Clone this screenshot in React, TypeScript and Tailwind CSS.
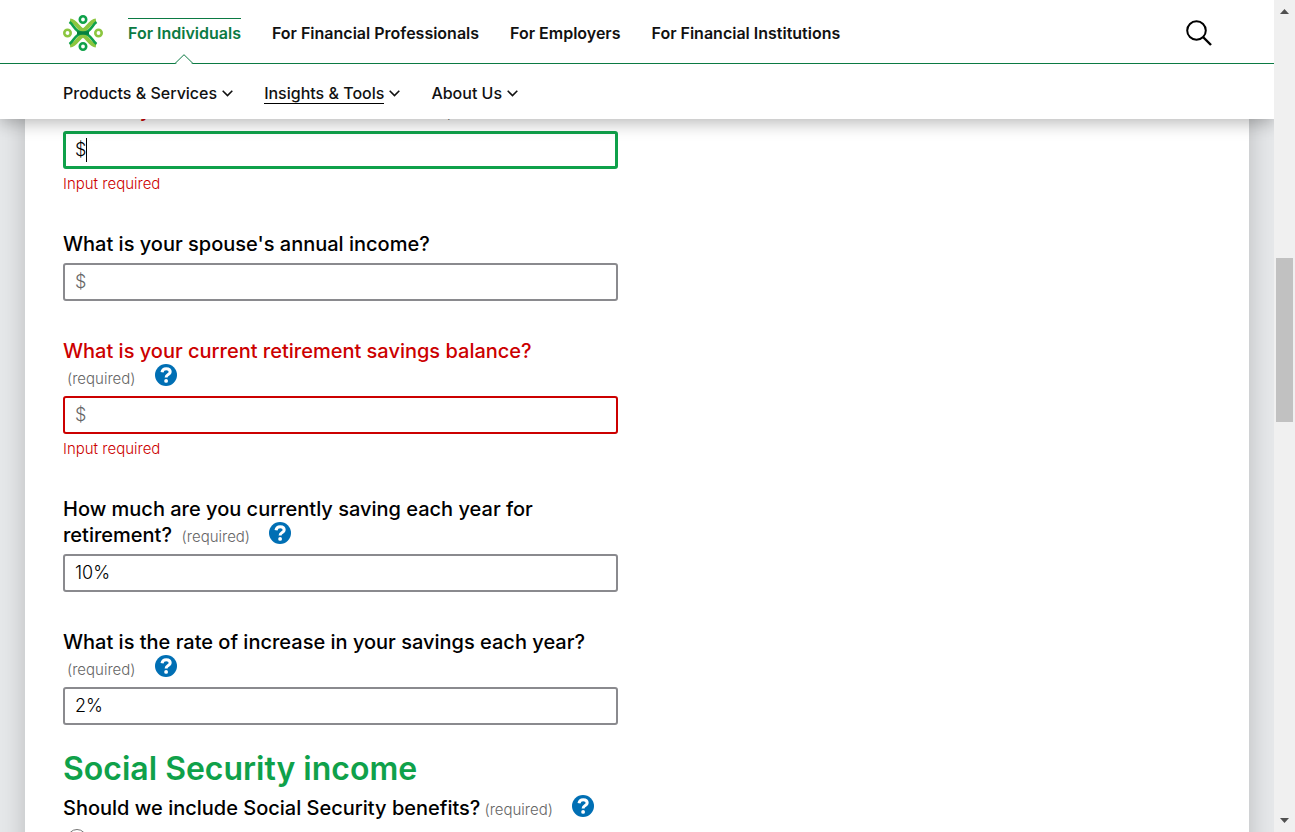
import { useId, useState } from 'react';

const audiences = ['For Individuals', 'For Financial Professionals', 'For Employers', 'For Financial Institutions'];
const sections = ['Products & Services', 'Insights & Tools', 'About Us'];

function Logo() {
  return (
    <svg width="40" height="36" viewBox="0 0 40 36" fill="none" aria-hidden="true">
      <g stroke="#8cc63f" strokeWidth="4">
        <path d="M33 5.500C25.500 6.500 24.500 16.500 15 18" />
        <path d="M7 5.500C14.500 6.500 15.500 16.500 25 18" />
        <path d="M33 30.500C25.500 29.500 24.500 19.500 15 18" />
        <path d="M7 30.500C14.500 29.500 15.500 19.500 25 18" />
      </g>
      <g stroke="#0fa14a" strokeWidth="2.600">
        <path d="M6.500 7C11 10 11.500 16 19 18C11.500 20 11 26 6.500 29" />
        <path d="M33.500 7C29 10 28.500 16 21 18C28.500 20 29 26 33.500 29" />
      </g>
      <path d="M14 16.300H26V19.700H14Z" fill="#078040" />
      <g strokeWidth="2.600">
        <circle cx="20" cy="4.500" r="3.200" stroke="#0fa14a" />
        <circle cx="20" cy="31.500" r="3.200" stroke="#0fa14a" />
        <circle cx="4.500" cy="18" r="3.200" stroke="#8cc63f" />
        <circle cx="35.500" cy="18" r="3.200" stroke="#8cc63f" />
      </g>
    </svg>
  );
}

function Chevron() {
  return (
    <svg width="11" height="7" viewBox="0 0 11 7" fill="none" stroke="#111" strokeWidth="1.6" aria-hidden="true">
      <path d="M.7 .8L5.500 5.600L10.300 .8" />
    </svg>
  );
}

function HelpButton() {
  return (
    <button type="button" aria-label="Help" className="ml-[19px] inline-block h-[22px] w-[22px] align-[-2px]">
      <svg width="22" height="22" viewBox="0 0 22 22" aria-hidden="true" className="block">
        <circle cx="11" cy="11" r="11" fill="#006fb4" />
        <path d="M7 8.300C7.400 5.700 9 4.700 11.200 4.700C13.600 4.700 15.200 6 15.200 8C15.200 10.600 11.100 10.500 11.100 13.400" fill="none" stroke="#fff" strokeWidth="3" />
        <circle cx="11.100" cy="16.900" r="1.900" fill="#fff" />
      </svg>
    </button>
  );
}

function Required({ id, help = true }: { id: string; help?: boolean }) {
  return (
    <span className="ml-1 inline-block whitespace-nowrap">
      <label htmlFor={id} className="text-[15px] leading-5 font-light text-[#666]">(required)</label>
      {help && <HelpButton />}
    </span>
  );
}

type FieldProps = { label: string; initial?: string; required?: boolean; help?: boolean; error?: boolean; active?: boolean };

function Field({ label, initial = '', required = false, help = true, error = false, active = false }: FieldProps) {
  const id = useId();
  const [value, setValue] = useState(initial);
  const border = active ? 'border-[3px] border-[#0fa14a] px-[9px]' : error ? 'border-2 border-[#c00] px-2.5' : 'border-2 border-[#8a8a8e] px-2.5';
  return (
    <div>
      <div className={active ? 'mb-2 text-xl leading-[26px]' : 'mb-1.5 text-xl leading-[26px]'}>
        <label htmlFor={id} className={error ? 'font-medium text-[#c00]' : 'font-medium text-black'}>{label}</label>{' '}
        {required && <Required id={id} help={help} />}
      </div>
      <div className={`flex h-[38px] items-center rounded-[3px] bg-white ${border}`}>
        {active && <span className="text-lg font-light text-black">$</span>}
        {active && <span className="h-6 w-px bg-black" />}
        <input
          id={id}
          value={value}
          onChange={(e) => setValue(e.target.value)}
          placeholder={active ? undefined : '$'}
          className="min-w-0 flex-1 bg-transparent text-lg font-light text-black outline-none placeholder:text-[#666]"
        />
      </div>
      {error && <p className="mt-[5px] text-[15px] leading-5 font-light text-[#c00]">Input required</p>}
    </div>
  );
}

function Header() {
  return (
    <header className="relative z-10 bg-white shadow-[0_4px_16px_rgba(0,0,0,0.28)]">
      <div className="flex h-16 items-stretch border-b border-[#0b7a43] pr-[62px] pl-[63px]">
        <a href="#home" aria-label="Home" className="mt-[15px]"><Logo /></a>
        <nav className="ml-[25px] flex gap-[31px] font-semibold text-[#111]">
          {audiences.map((name, i) =>
            i === 0 ? (
              <a key={name} href="#individuals" className="relative mt-[18px] border-t border-[#0b7a43] pt-0.5 text-[#0b7a43]">
                {name}
                <svg width="18" height="10" viewBox="0 0 18 10" className="absolute -bottom-px left-1/2 -translate-x-1/2" aria-hidden="true">
                  <path d="M0 9.500L9 .7L18 9.500" fill="#fff" stroke="#0b7a43" />
                  <path d="M1.500 9.500H16.500" stroke="#fff" />
                </svg>
              </a>
            ) : (
              <a key={name} href="#audience" className="mt-[21px]">{name}</a>
            ),
          )}
        </nav>
        <button type="button" aria-label="Search" className="ml-auto">
          <svg width="26" height="26" viewBox="0 0 26 26" fill="none" stroke="#000" strokeWidth="2" className="mt-[3px]" aria-hidden="true">
            <circle cx="10.500" cy="10.500" r="9.300" />
            <path d="M17 17L25 25" strokeWidth="2.400" />
          </svg>
        </button>
      </div>
      <nav className="flex h-[55px] items-center gap-[31px] px-[63px] pt-1 font-medium text-[#111]">
        {sections.map((name, i) => (
          <a key={name} href="#section" className="flex items-center gap-[5px]">
            <span className={i === 1 ? 'border-b border-black leading-5' : 'border-b border-transparent leading-5'}>{name}</span>
            <Chevron />
          </a>
        ))}
      </nav>
    </header>
  );
}

function ScrollTrack() {
  return (
    <div aria-hidden="true" className="relative z-20 flex w-[21px] shrink-0 flex-col items-center bg-[#f0f0f0] py-[9px]">
      <svg width="9" height="5" viewBox="0 0 9 5" fill="#505050"><path d="M0 5L4.500 0L9 5Z" /></svg>
      <div className="flex w-[17px] flex-1 flex-col">
        <div className="basis-[30.4%]" />
        <div className="basis-[20.4%] bg-[#c1c1c1]" />
      </div>
      <svg width="9" height="5" viewBox="0 0 9 5" fill="#505050"><path d="M0 0L4.500 5L9 0Z" /></svg>
    </div>
  );
}

export default function App() {
  return (
    <div className="flex h-screen overflow-hidden font-[Inter,sans-serif] text-base">
      <div className="flex min-w-0 flex-1 flex-col">
        <Header />
        <main className="min-h-0 flex-1 overflow-hidden bg-[#e6e8ea] px-[25px]">
          <form className="-mt-[22px] bg-white px-[38px] pb-10 shadow-[0_0_25px_rgba(0,0,0,0.2)]">
            <div className="flex w-[555px] max-w-full flex-col gap-[37px]">
              <Field label="What is your current annual income?" required help={false} error active />
              <Field label="What is your spouse's annual income?" />
              <Field label="What is your current retirement savings balance?" required error />
              <Field label="How much are you currently saving each year for retirement?" initial="10%" required />
              <Field label="What is the rate of increase in your savings each year?" initial="2%" required />
            </div>
            <h2 className="mt-6 text-[32px] leading-10 font-semibold text-[#0fa14a]">Social Security income</h2>
            <div className="mt-1.5 text-xl leading-[26px]">
              <label htmlFor="benefits-yes" className="font-medium">Should we include Social Security benefits?</label>
              <Required id="benefits-yes" />
            </div>
            <div className="mt-2 ml-1">
              <input id="benefits-yes" type="radio" name="benefits" aria-label="Yes" className="block h-5 w-5" />
            </div>
          </form>
        </main>
      </div>
      <ScrollTrack />
    </div>
  );
}
